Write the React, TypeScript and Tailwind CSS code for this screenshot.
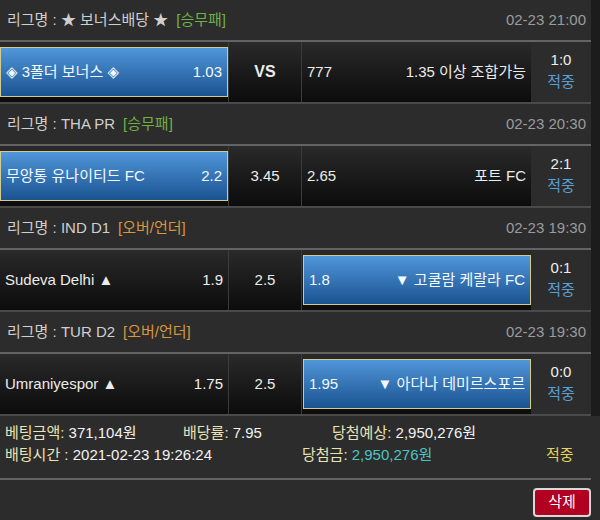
import React from "react";

const FONT = { fontFamily: '"Liberation Sans", "Noto Sans CJK KR", "DejaVu Sans", sans-serif' };

type Side = { text: string; odd: string; sel: boolean };
type Block = {
  league: string;
  type: string;
  typeColor: string;
  date: string;
  home: Side;
  mid: string;
  midBold?: boolean;
  away: Side;
  score: string;
};

const blocks: Block[] = [
  {
    league: "리그명 : ★ 보너스배당 ★",
    type: "[승무패]",
    typeColor: "text-[#6fb146]",
    date: "02-23 21:00",
    home: { text: "◈ 3폴더 보너스 ◈", odd: "1.03", sel: true },
    mid: "VS",
    midBold: true,
    away: { text: "1.35 이상 조합가능", odd: "777", sel: false },
    score: "1:0",
  },
  {
    league: "리그명 : THA PR",
    type: "[승무패]",
    typeColor: "text-[#6fb146]",
    date: "02-23 20:30",
    home: { text: "무앙통 유나이티드 FC", odd: "2.2", sel: true },
    mid: "3.45",
    away: { text: "포트 FC", odd: "2.65", sel: false },
    score: "2:1",
  },
  {
    league: "리그명 : IND D1",
    type: "[오버/언더]",
    typeColor: "text-[#d8963f]",
    date: "02-23 19:30",
    home: { text: "Sudeva Delhi ▲", odd: "1.9", sel: false },
    mid: "2.5",
    away: { text: "▼ 고쿨람 케랄라 FC", odd: "1.8", sel: true },
    score: "0:1",
  },
  {
    league: "리그명 : TUR D2",
    type: "[오버/언더]",
    typeColor: "text-[#d8963f]",
    date: "02-23 19:30",
    home: { text: "Umraniyespor ▲", odd: "1.75", sel: false },
    mid: "2.5",
    away: { text: "▼ 아다나 데미르스포르", odd: "1.95", sel: true },
    score: "0:0",
  },
];

function SideCell({ side, home }: { side: Side; home: boolean }) {
  const inner = (
    <div className="flex h-full items-center justify-between px-[5px]">
      {home ? (
        <>
          <span>{side.text}</span>
          <span>{side.odd}</span>
        </>
      ) : (
        <>
          <span>{side.odd}</span>
          <span>{side.text}</span>
        </>
      )}
    </div>
  );
  if (side.sel) {
    return (
      <div className={`h-full bg-gradient-to-b from-[#2a2a2a] to-[#0c0c0c] py-[5px] ${home ? "" : "pl-px"}`}>
        <div className="h-full border border-[#d3cc8e] bg-gradient-to-b from-[#5097da] to-[#1b5391] text-[#f4f8fc]">
          {inner}
        </div>
      </div>
    );
  }
  return (
    <div className="h-full bg-gradient-to-b from-[#2a2a2a] to-[#0c0c0c] text-[#ececec]">
      {inner}
    </div>
  );
}

function BlockView({ b }: { b: Block }) {
  return (
    <div>
      <div className="flex h-10 items-center justify-between pl-[7px] pr-[5px] text-[15px]">
        <div className="text-[#cfcfcf]">
          {b.league}
          <span className={`ml-[8px] ${b.typeColor}`}>{b.type}</span>
        </div>
        <div className="text-[#9b9b9b]">{b.date}</div>
      </div>
      <div className="h-[2px] bg-[#636363]" />
      <div className="grid h-[60px] grid-cols-[228px_74px_229px_60px] text-[15px]">
        <SideCell side={b.home} home={true} />
        <div
          className={`flex items-center justify-center border-x border-[#3b3b3b] bg-gradient-to-b from-[#2a2a2a] to-[#0c0c0c] text-[#ececec] ${
            b.midBold ? "text-[16px] font-bold" : ""
          }`}
        >
          {b.mid}
        </div>
        <SideCell side={b.away} home={false} />
        <div className="flex flex-col items-center justify-center pb-[2px] leading-[22px]">
          <span className="text-[#eeeeee]">{b.score}</span>
          <span className="text-[#5a9fd8]">적중</span>
        </div>
      </div>
      <div className="h-[2px] bg-[#4a4a4a]" />
    </div>
  );
}

export default function App() {
  return (
    <div className="h-[520px] w-[600px] overflow-hidden bg-[#2c2c2c]" style={FONT}>
      <div className="flex">
        <div className="w-[591px]">
          {blocks.map((b, i) => (
            <BlockView key={i} b={b} />
          ))}
        </div>
        <div className="flex-1 bg-[#1c1c1c]" />
      </div>
      <div className="w-[591px]">
        <div className="pt-[6px] pb-[12px] text-[15px] leading-[22px]">
          <div className="flex">
            <div className="w-[183px] pl-[5px]">
              <span className="text-[#e8e4b6]">베팅금액: </span>
              <span className="text-[#f2f2f2]">371,104원</span>
            </div>
            <div className="w-[149px]">
              <span className="text-[#e8e4b6]">배당률: </span>
              <span className="text-[#f2f2f2]">7.95</span>
            </div>
            <div>
              <span className="text-[#e8e4b6]">당첨예상: </span>
              <span className="text-[#f2f2f2]">2,950,276원</span>
            </div>
          </div>
          <div className="flex">
            <div className="w-[302px] pl-[5px]">
              <span className="text-[#e8e4b6]">배팅시간 : </span>
              <span className="text-[#f2f2f2]">2021-02-23 19:26:24</span>
            </div>
            <div className="w-[244px]">
              <span className="text-[#e8e4b6]">당첨금: </span>
              <span className="text-[#4ec3c3]">2,950,276원</span>
            </div>
            <div className="text-[#e2d45c]">적중</div>
          </div>
        </div>
        <div className="h-[2px] bg-[#636363]" />
        <div className="flex justify-end pt-[8px]">
          <button className="h-[29px] w-[58px] rounded-[4px] border-2 border-[#d9d9d9] bg-[#b10020] text-[15px] text-white">
            삭제
          </button>
        </div>
      </div>
    </div>
  );
}
